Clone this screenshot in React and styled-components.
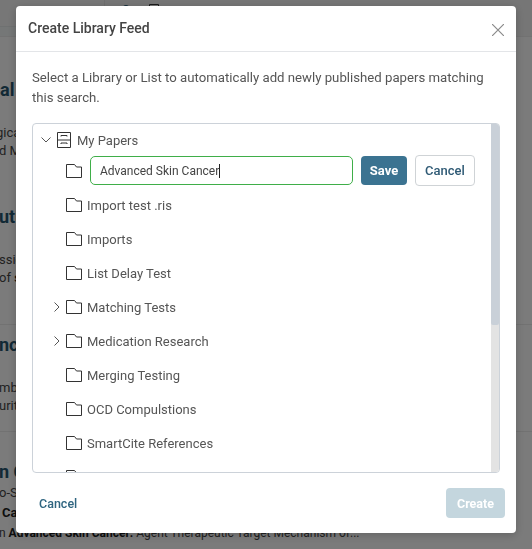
import React from 'react';
import styled, {createGlobalStyle} from 'styled-components';

const GlobalStyle = createGlobalStyle`
    * {
        box-sizing: border-box;
    }

    html, body {
        margin: 0;
        height: 100%;
        overflow: hidden;
    }

    body {
        background: #f6f6f6;
        font-family: Roboto, "Liberation Sans", sans-serif;
    }
`;

const Page = styled.main`
    height: 549px;
    overflow: hidden;
`;

const PageHeader = styled.header`
    height: 37px;
    background: #eaeeee;
    border-bottom: 1px solid #e4e4e4;
    margin-bottom: 41px;
    display: flex;
    align-items: flex-start;
`;

const SideTab = styled.div`
    width: 104px;
    height: 27px;
    background: #eeeeee;
    border-bottom: 1px solid #dfe2e2;
`;

const Toolbar = styled.div`
    flex: 1;
    height: 36px;
    background: #ececec;
    border-left: 1px solid #dedede;
    padding: 4px 0 0 16px;
    display: flex;
    align-items: flex-start;
    gap: 18px;
`;

const Result = styled.article`
    height: ${props => props.$height}px;
    padding-top: ${props => props.$top || 0}px;
    border-bottom: ${props => props.$rule ? '1px solid #e4e4e4' : 'none'};
`;

const ResultTitle = styled.h3`
    margin: 0 0 ${props => props.$gap}px ${props => props.$x || 0}px;
    font-size: 18px;
    line-height: 24px;
    font-weight: 700;
    color: #24526b;
    white-space: nowrap;
`;

const ResultLine = styled.p`
    margin: 0 0 ${props => props.$gap || 0}px ${props => props.$x || 0}px;
    font-size: ${props => props.$size || 13}px;
    line-height: 18px;
    color: #444;
    white-space: nowrap;

    b {
        color: #1c1c1c;
    }
`;

const Backdrop = styled.div`
    position: fixed;
    inset: 0;
    background: rgba(0, 0, 0, 0.5);
    padding: 6px 16px;
`;

const Modal = styled.section`
    width: 500px;
    height: 527px;
    background: #fff;
    border-radius: 4px;
    box-shadow: 0 2px 10px rgba(0, 0, 0, 0.2);
    display: flex;
    flex-direction: column;
`;

const ModalHeader = styled.header`
    height: 46px;
    flex: none;
    border-bottom: 1px solid #e3e5e8;
    padding: 0 12px 1px;
    display: flex;
    align-items: center;
    justify-content: space-between;
`;

const ModalTitle = styled.h2`
    margin: 0;
    font-size: 14px;
    font-weight: 500;
    color: #444;
`;

const CloseButton = styled.button`
    border: 0;
    background: none;
    padding: 0;
    display: flex;
    margin-top: 3px;
`;

const ModalBody = styled.div`
    flex: none;
    padding: 16px 16px 0;
`;

const Intro = styled.p`
    margin: 0 0 15px;
    font-size: 13.2px;
    line-height: 20px;
    color: #555;
`;

const TreeBox = styled.div`
    height: 350px;
    border: 1px solid #ccd2d9;
    border-radius: 4px;
    overflow: hidden;
    display: flex;
`;

const TreeList = styled.div`
    flex: 1;
    min-width: 0;
    overflow: hidden;
`;

const ScrollTrack = styled.div`
    width: 8px;
    flex: none;
    background: #e3e3e3;
`;

const ScrollThumb = styled.div`
    height: ${props => props.$height}px;
    background: #c9d0d8;
    border-radius: 0 0 2px 2px;
`;

const Row = styled.div`
    height: ${props => props.$height || 34}px;
    padding-top: ${props => props.$top || 0}px;
    display: flex;
    align-items: center;
    padding-left: ${props => props.$indent}px;
    font-size: 13px;
    color: #555;
    white-space: nowrap;
`;

const EditRow = styled.div`
    height: 33px;
    display: flex;
    align-items: flex-start;
    padding-left: 33px;
`;

const EditFolder = styled.span`
    display: flex;
    height: 31px;
    align-items: center;
    margin-right: 8px;
`;

const Toggle = styled.span`
    width: ${props => props.$width}px;
    flex: none;
    display: flex;
`;

const RowIcon = styled.span`
    display: flex;
    margin-right: ${props => props.$gap}px;
`;

const NameField = styled.div`
    width: 263px;
    height: 29px;
    margin-top: 1px;
    border: 1px solid #3fae49;
    border-radius: 5px;
    padding-left: 9px;
    display: flex;
    align-items: center;
    font-size: 12px;
    color: #444;
`;

const Caret = styled.span`
    width: 1px;
    height: 14px;
    background: #222;
`;

const SaveButton = styled.button`
    width: 46px;
    height: 29px;
    margin: 1px 0 0 8px;
    border: 0;
    border-radius: 4px;
    background: #3b7391;
    color: #fff;
    font: 700 13px Roboto, sans-serif;
`;

const OutlineButton = styled.button`
    width: 60px;
    height: 31px;
    margin-left: 8px;
    border: 1px solid #cfd3d6;
    border-radius: 4px;
    background: #fff;
    color: #2f5a75;
    font: 500 13px Roboto, sans-serif;
`;

const ModalFooter = styled.footer`
    flex: 1;
    display: flex;
    align-items: center;
    justify-content: space-between;
    padding: 0 11px 0 23px;
`;

const TextButton = styled.button`
    border: 0;
    background: none;
    padding: 0;
    color: #2f6580;
    font: 500 12.5px Roboto, sans-serif;
`;

const CreateButton = styled.button`
    width: 59px;
    height: 30px;
    border: 0;
    border-radius: 4px;
    background: #c4d6de;
    color: #fff;
    font: 700 12.5px Roboto, sans-serif;
`;

const Folder = () => (
    <svg width="16" height="14" viewBox="0 0 16 14" fill="none" stroke="#333" strokeWidth="1">
        <path d="M.5 13.5V.5H8.5L10.5 3H15.5V13.5Z"/>
    </svg>
);

const Cabinet = () => (
    <svg width="14" height="16" viewBox="0 0 14 16" fill="none" stroke="#333" strokeWidth="1">
        <path d="M.5.5H13.5V15.5H.5ZM.5 8H13.5M4 4.5V3.5H10V4.5M4 12V11H10V12"/>
    </svg>
);

const ChevronDown = () => (
    <svg width="10" height="6" viewBox="0 0 10 6" fill="none" stroke="#555" strokeWidth="1">
        <path d="M.5.5L5 5L9.5.5"/>
    </svg>
);

const ChevronRight = () => (
    <svg width="6" height="10" viewBox="0 0 6 10" fill="none" stroke="#555" strokeWidth="1">
        <path d="M.5.5L5 5L.5 9.5"/>
    </svg>
);

const CloseIcon = () => (
    <svg width="12" height="12" viewBox="0 0 12 12" fill="none" stroke="#8a8a8a" strokeWidth="1.2">
        <path d="M0 0L12 12M12 0L0 12"/>
    </svg>
);

const ToolDot = () => (
    <svg width="10" height="6" viewBox="0 0 10 6"><circle cx="5" cy="4" r="3" fill="#2a5a75"/></svg>
);

const ToolBox = () => (
    <svg width="10" height="6" viewBox="0 0 10 6" fill="none" stroke="#333"><path d="M.5 6V.5H9.5V6"/></svg>
);

const folders = [
    {name: 'Import test .ris'},
    {name: 'Imports'},
    {name: 'List Delay Test'},
    {name: 'Matching Tests', nested: true},
    {name: 'Medication Research', nested: true},
    {name: 'Merging Testing'},
    {name: 'OCD Compulstions'},
    {name: 'SmartCite References'},
    {name: 'Systematic Reviews', nested: true},
];

const FolderRow = ({name, nested}) => (
    <Row $indent={21}>
        <Toggle $width={12}>{nested && <ChevronRight/>}</Toggle>
        <RowIcon $gap={5}><Folder/></RowIcon>
        {name}
    </Row>
);

const BackgroundPage = () => (
    <Page>
        <PageHeader>
            <SideTab/>
            <Toolbar><ToolDot/><ToolBox/></Toolbar>
        </PageHeader>
        <Result $height={247} $rule>
            <ResultTitle $gap={22}>al</ResultTitle>
            <ResultLine $x={-4}>gical</ResultLine>
            <ResultLine $x={-1} $gap={45}>d Medical</ResultLine>
            <ResultTitle $gap={22} $x={-1}>uture</ResultTitle>
            <ResultLine $x={-1}>ssion</ResultLine>
            <ResultLine $x={-1}>of <b>skin</b></ResultLine>
        </Result>
        <Result $height={107} $top={8} $rule>
            <ResultTitle $gap={22} $x={-1}>nce</ResultTitle>
            <ResultLine $x={-1}>mber</ResultLine>
            <ResultLine $x={-1}>urity</ResultLine>
        </Result>
        <Result $height={118} $top={28}>
            <ResultTitle $gap={0} $x={-1}>n Cancer</ResultTitle>
            <ResultLine $x={-1} $gap={2}>o-Skin</ResultLine>
            <ResultLine $x={2} $gap={2}><b>Cancer</b></ResultLine>
            <ResultLine $x={-1} $size={12}>n <b>Advanced Skin Cancer:</b> Agent Therapeutic Target Mechanism of...</ResultLine>
        </Result>
    </Page>
);

const App = () => (
    <>
        <GlobalStyle/>
        <BackgroundPage/>
        <Backdrop>
            <Modal>
                <ModalHeader>
                    <ModalTitle>Create Library Feed</ModalTitle>
                    <CloseButton aria-label="Close"><CloseIcon/></CloseButton>
                </ModalHeader>
                <ModalBody>
                    <Intro>Select a Library or List to automatically add newly published papers matching this search.</Intro>
                    <TreeBox>
                        <TreeList>
                            <Row $indent={8} $height={31} $top={1}>
                                <Toggle $width={16}><ChevronDown/></Toggle>
                                <RowIcon $gap={6}><Cabinet/></RowIcon>
                                My Papers
                            </Row>
                            <EditRow>
                                <EditFolder><Folder/></EditFolder>
                                <NameField>Advanced Skin Cancer<Caret/></NameField>
                                <SaveButton>Save</SaveButton>
                                <OutlineButton>Cancel</OutlineButton>
                            </EditRow>
                            {folders.map(folder => <FolderRow key={folder.name} {...folder}/>)}
                        </TreeList>
                        <ScrollTrack><ScrollThumb $height={201}/></ScrollTrack>
                    </TreeBox>
                </ModalBody>
                <ModalFooter>
                    <TextButton>Cancel</TextButton>
                    <CreateButton>Create</CreateButton>
                </ModalFooter>
            </Modal>
        </Backdrop>
    </>
);

export default App;
